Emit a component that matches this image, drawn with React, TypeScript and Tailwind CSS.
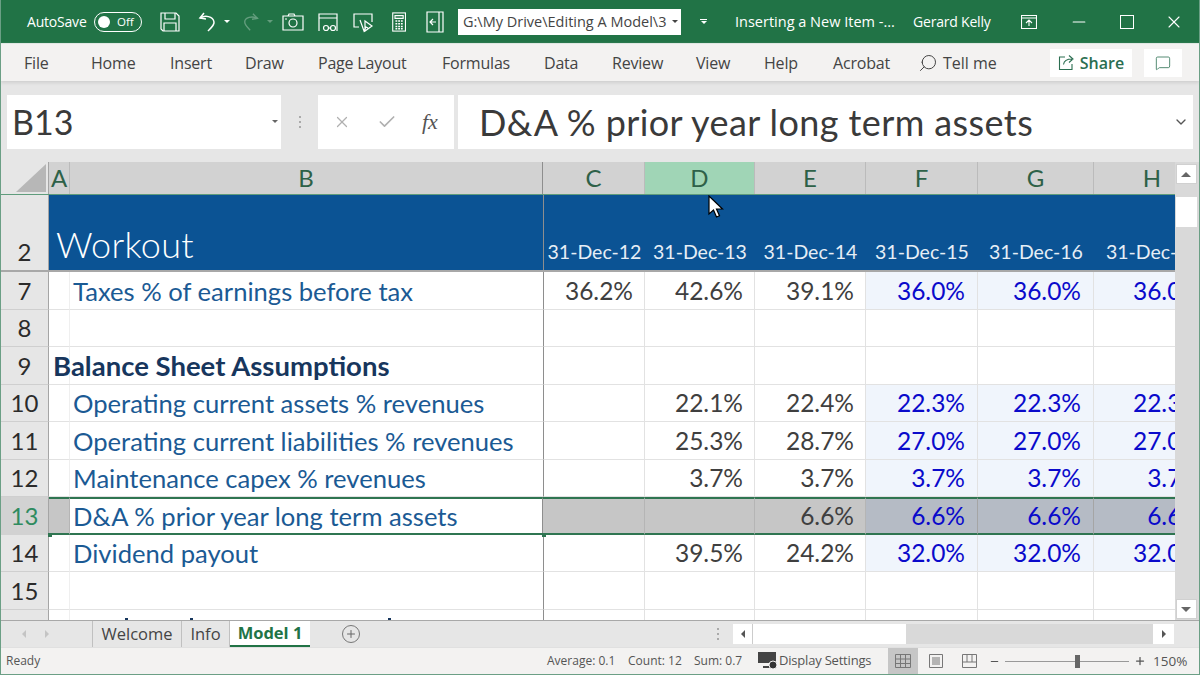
import React from 'react';
import { Search, MessageSquare, ChevronDown, Check, X, Plus, Minus } from 'lucide-react';

const COLS = 'grid grid-cols-[48px_21px_473px_102px_110px_111px_112px_116px_82px] grid-rows-[minmax(0,1fr)]';

type Row = {
  n: string;
  h: string;
  label?: string;
  bold?: boolean;
  vals?: string[];
  inputs?: string[];
};

const rows: Row[] = [
  { n: '7', h: 'h-[38px]', label: 'Taxes % of earnings before tax', vals: ['36.2%', '42.6%', '39.1%'], inputs: ['36.0%', '36.0%', '36.0%'] },
  { n: '8', h: 'h-[37px]' },
  { n: '9', h: 'h-[38px]', label: 'Balance Sheet Assumptions', bold: true },
  { n: '10', h: 'h-[37px]', label: 'Operating current assets % revenues', vals: ['', '22.1%', '22.4%'], inputs: ['22.3%', '22.3%', '22.3%'] },
  { n: '11', h: 'h-[38px]', label: 'Operating current liabilities % revenues', vals: ['', '25.3%', '28.7%'], inputs: ['27.0%', '27.0%', '27.0%'] },
  { n: '12', h: 'h-[37px]', label: 'Maintenance capex % revenues', vals: ['', '3.7%', '3.7%'], inputs: ['3.7%', '3.7%', '3.7%'] },
];

const rowsAfter: Row[] = [
  { n: '14', h: 'h-[37px]', label: 'Dividend payout', vals: ['', '39.5%', '24.2%'], inputs: ['32.0%', '32.0%', '32.0%'] },
  { n: '15', h: 'h-[38px]' },
];

const colHeads = [
  { t: 'C', cls: 'bg-[#d2d2d2]' },
  { t: 'D', cls: 'bg-[#a0d5b6]' },
  { t: 'E', cls: 'bg-[#d2d2d2]' },
  { t: 'F', cls: 'bg-[#d2d2d2]' },
  { t: 'G', cls: 'bg-[#d2d2d2]' },
];

const dates = ['31-Dec-12', '31-Dec-13', '31-Dec-14', '31-Dec-15', '31-Dec-16'];

const grid = 'border-b border-r border-[#e2e2e2]';
const sel = 'border-y-2 border-y-[#2f7551]';

const ValCell = ({ v, sep }: { v: string; sep?: boolean }) => (
  <div className={`${grid} ${sep ? 'border-l border-l-[#8e8e8e]' : ''} flex items-center justify-end pr-[11px] text-[24.500px] text-[#3f3f3f]`}>{v}</div>
);

const InputCell = ({ v, clip }: { v?: string; clip?: boolean }) => (
  <div className={`${grid} ${v ? 'bg-[#f0f5fc]' : ''} flex items-center overflow-hidden ${clip ? 'justify-start' : 'justify-end pr-3'} text-[24.500px] text-[#0a0acb]`}>
    {clip ? <span className="w-[119px] shrink-0 pr-3 text-right">{v}</span> : v}
  </div>
);

const SheetRow = ({ row }: { row: Row }) => (
  <div className={`${COLS} ${row.h}`}>
    <div className="flex items-center justify-center border-b border-r border-b-[#cfcfcf] border-r-[#a5a5a5] bg-[#e6e6e6] text-[24px] text-[#2b2b2b]">{row.n}</div>
    <div className="border-b border-r border-b-[#e2e2e2] border-r-[#efefef]" />
    <div className={`flex items-center whitespace-nowrap border-b border-[#e2e2e2] ${row.bold ? 'ml-[-17px] text-[27.500px] font-bold text-[#17365d]' : 'pl-[3px] text-[25.600px] text-[#1b5a94]'}`}>{row.label}</div>
    <ValCell v={row.vals?.[0] ?? ''} sep />
    <ValCell v={row.vals?.[1] ?? ''} />
    <ValCell v={row.vals?.[2] ?? ''} />
    <InputCell v={row.inputs?.[0]} />
    <InputCell v={row.inputs?.[1]} />
    <InputCell v={row.inputs?.[2]} clip />
  </div>
);

const QatIcon = ({ children, w = 22 }: { children: React.ReactNode; w?: number }) => (
  <svg width={w} height="22" viewBox="0 0 22 22" fill="none" stroke="#fff" strokeWidth="1.2" className="shrink-0">
    {children}
  </svg>
);

const Caret = ({ cls = 'border-t-white' }: { cls?: string }) => (
  <span className={`inline-block h-0 w-0 border-x-[3px] border-t-[3px] border-x-transparent ${cls}`} />
);

const Dots = () => (
  <>
    <span className="h-[2px] bg-[#aaa]" />
    <span className="h-[2px] bg-[#aaa]" />
    <span className="h-[2px] bg-[#aaa]" />
  </>
);

const TitleBar = () => (
  <div className="flex h-[43px] items-center bg-[#217346] pl-[26px] text-[14px] text-white">
    <span className="w-[67px] tracking-[-0.2px]">AutoSave</span>
    <span className="flex h-[20px] w-[48px] items-center rounded-full border border-white pl-[3px] text-[11.500px]">
      <span className="h-[12px] w-[12px] rounded-full bg-white" />
      <span className="ml-[7px]">Off</span>
    </span>
    <div className="ml-[17px]">
      <QatIcon>
        <path d="M2 2h15l3 3v15H4l-2-2z" />
        <path d="M6 2v6h10V2M5 20v-8h12v8" />
      </QatIcon>
    </div>
    <div className="ml-[15px]">
      <QatIcon>
        <path d="M8 2L4 7l6 1" strokeWidth="1.5" />
        <path d="M4 7c5-3 13-2 14 4 .5 3-3 6-6 9" strokeWidth="1.5" />
      </QatIcon>
    </div>
    <span className="ml-[6px] flex"><Caret /></span>
    <div className="ml-[12px] opacity-30">
      <QatIcon w={20}>
        <path d="M12 2l5 5-6 1" strokeWidth="1.5" />
        <path d="M17 7C11 4 3 6 3 11c0 3 3 6 6 9" strokeWidth="1.5" />
      </QatIcon>
    </div>
    <span className="ml-[5px] flex opacity-30"><Caret /></span>
    <div className="ml-[9px]">
      <QatIcon>
        <path d="M1 5h20v14H1zM6 5l1-2h5l1 2" />
        <circle cx="11" cy="12" r="4" />
        <path d="M3 8h2" />
      </QatIcon>
    </div>
    <div className="ml-[13px]">
      <QatIcon>
        <path d="M2 20V3h18v17M2 7h18" />
        <circle cx="9" cy="17" r="2.5" />
        <circle cx="16" cy="17" r="2.5" />
        <path d="M11.500 17h2" />
      </QatIcon>
    </div>
    <div className="ml-[13px]">
      <QatIcon>
        <path d="M7 16H2V3h18v8" />
        <path d="M8 9l4 11 2-4 2 1M13 10l7 5-7 5z" />
      </QatIcon>
    </div>
    <div className="ml-[16px]">
      <QatIcon w={20}>
        <rect x="3" y="1" width="14" height="20" />
        <path d="M5.500 4h9v3h-9z" />
        <path d="M6 10h8M6 13h8M6 16h8M6 18.500h8" strokeDasharray="2 1" strokeWidth="1.600" />
      </QatIcon>
    </div>
    <div className="ml-[14px]">
      <QatIcon>
        <path d="M3 1h16v20H3zM15 1v20" />
        <path d="M12 11H6M9 8l-3 3 3 3" />
      </QatIcon>
    </div>
    <div className="ml-[12px] flex h-[26px] w-[223px] items-center justify-between bg-white pl-[5px] pr-[3px] text-[14.500px] text-[#444]">
      <span className="whitespace-nowrap">G:\My Drive\Editing A Model\3</span>
      <Caret cls="border-t-[#444]" />
    </div>
    <span className="ml-[19px] flex flex-col items-center gap-[1px]">
      <span className="h-[1px] w-[7px] bg-white" />
      <Caret />
    </span>
    <span className="ml-[28px] w-[178px] whitespace-nowrap text-[14.500px]">Inserting a New Item -...</span>
    <span className="w-[108px] whitespace-nowrap tracking-[-0.2px]">Gerard Kelly</span>
    <svg width="16" height="14" viewBox="0 0 16 14" fill="none" stroke="#fff" strokeWidth="1.1">
      <path d="M.5.500h15v13H.500zM.500 3h15M8 11V5M5 8l3-3 3 3" />
    </svg>
    <Minus size={20} strokeWidth={1.300} className="ml-[32px]" />
    <span className="ml-[31px] h-[14px] w-[14px] border border-white" />
    <X size={20} strokeWidth={1.300} className="ml-[30px]" />
  </div>
);

const tabs = [
  { t: 'File', cls: 'w-[67px]' },
  { t: 'Home', cls: 'w-[79px]' },
  { t: 'Insert', cls: 'w-[75px]' },
  { t: 'Draw', cls: 'w-[73px]' },
  { t: 'Page Layout', cls: 'w-[124px]' },
  { t: 'Formulas', cls: 'w-[102px]' },
  { t: 'Data', cls: 'w-[68px]' },
  { t: 'Review', cls: 'w-[84px]' },
  { t: 'View', cls: 'w-[68px]' },
  { t: 'Help', cls: 'w-[69px]' },
  { t: 'Acrobat', cls: 'w-[85px]' },
];

const RibbonTabs = () => (
  <div className="relative flex h-[38px] items-center border-t border-[#dfe7e2] bg-[#f3f2f1] pl-[23px] text-[16px] text-[#444] shadow-[0_2px_3px_#d0d0d0]">
    {tabs.map((tab) => (
      <span key={tab.t} className={`${tab.cls} whitespace-nowrap tracking-[-0.2px]`}>{tab.t}</span>
    ))}
    <Search size={20} strokeWidth={1.200} className="-scale-x-100 text-[#444]" />
    <span className="ml-[5px] w-[107px]">Tell me</span>
    <span className="flex h-[28px] w-[82px] items-center justify-center gap-[5px] bg-white font-semibold text-[#2b6e51]">
      <svg width="17" height="17" viewBox="0 0 17 17" fill="none" stroke="#2b6e51" strokeWidth="1.100" className="shrink-0">
        <path d="M7 3H1.500v12.500H14V10M5.500 10.500C6 7 9 5 14 5M11 1.500L15 5l-4 3.500" />
      </svg>
      Share
    </span>
    <span className="ml-[12px] flex h-[28px] w-[38px] items-center justify-center bg-white">
      <MessageSquare size={16} strokeWidth={1.200} className="text-[#2b6e51]" />
    </span>
  </div>
);

const FormulaBar = () => (
  <div className="flex h-[81px] items-center bg-[#e6e6e6] pl-[6px] font-['Lato',sans-serif] text-[#3a3a3a]">
    <div className="flex h-[54px] w-[274px] items-center justify-between bg-white pl-[5px] pr-[3px] text-[34px]">
      <span>B13</span>
      <Caret cls="border-t-[#666]" />
    </div>
    <div className="ml-[18px] flex w-[2px] flex-col gap-[3px]"><Dots /></div>
    <div className="ml-[17px] flex h-[54px] w-[136px] items-center bg-white pl-[15px] text-[#b0b0b0]">
      <X size={18} strokeWidth={1.600} />
      <Check size={20} strokeWidth={2} className="ml-[26px]" />
      <span className="ml-[25px] font-['Liberation_Serif',serif] text-[22px] italic text-[#555]">fx</span>
    </div>
    <div className="ml-[4px] flex h-[54px] w-[735px] items-center justify-between bg-white pl-[21px] pr-[4px] text-[36px] tracking-[0.4px]">
      <span>D&amp;A % prior year long term assets</span>
      <ChevronDown size={16} strokeWidth={2} className="text-[#555]" />
    </div>
  </div>
);

const Sheet = () => (
  <div className="relative h-[458px] overflow-hidden bg-white font-['Lato',sans-serif] text-[24px] leading-[30px]">
    {/* column headers */}
    <div className={`${COLS} h-[33px] border-b border-[#5f9c7c] text-[#2e6148]`}>
      <div className="flex items-end justify-end border-r border-[#a5a5a5] bg-[#e6e6e6] pb-[2px] pr-[2px]">
        <svg width="30" height="28" viewBox="0 0 30 28"><polygon points="30,0 30,28 0,28" fill="#b7b7b7" /></svg>
      </div>
      <div className="flex items-center justify-center border-r border-[#bbb] bg-[#d2d2d2]">A</div>
      <div className="flex items-center justify-center border-r border-[#8e8e8e] bg-[#d2d2d2]">B</div>
      {colHeads.map((c) => (
        <div key={c.t} className={`flex items-center justify-center border-r border-[#bbb] ${c.cls}`}>{c.t}</div>
      ))}
      <div className="overflow-hidden bg-[#d2d2d2]"><span className="flex h-full w-[116px] items-center justify-center">H</span></div>
    </div>
    {/* frozen title row */}
    <div className={`${COLS} h-[77px] border-b-2 border-[#a8a8a8]`}>
      <div className="flex items-end justify-center border-r border-[#a5a5a5] bg-[#e6e6e6] pb-[3px] text-[#2b2b2b]">2</div>
      <div className="col-span-2 flex items-end bg-[#0b5394] pb-[2px] pl-[7px] text-[36px] font-light leading-[48px] tracking-[0.3px] text-white">Workout</div>
      {dates.map((d, i) => (
        <div key={d} className={`flex items-end justify-center bg-[#0b5394] pb-[3px] text-[19.500px] text-[#e6eef6] ${i === 0 ? 'border-l border-[#8e8e8e]' : ''}`}>{d}</div>
      ))}
      <div className="flex items-end overflow-hidden whitespace-nowrap bg-[#0b5394] pb-[3px] pl-3 text-[19.500px] text-[#e6eef6]">31-Dec-17</div>
    </div>
    {rows.map((r) => <SheetRow key={r.n} row={r} />)}
    {/* selected row */}
    <div className={`${COLS} h-[38px] text-[24.500px]`}>
      <div className="flex items-center justify-center border-r border-[#a5a5a5] bg-[#d2d2d2] text-[24px] text-[#2e8b5f]">13</div>
      <div className={`${sel} border-r border-[#b5b5b5] bg-[#c6c6c6]`} />
      <div className={`${sel} flex items-center whitespace-nowrap border-r border-r-[#8e8e8e] bg-white pl-[3px] text-[25.600px] text-[#1b5a94]`}>D&amp;A % prior year long term assets</div>
      <div className={`${sel} border-r border-r-[#b5b5b5] bg-[#c6c6c6]`} />
      <div className={`${sel} border-r border-r-[#b5b5b5] bg-[#c6c6c6]`} />
      <div className={`${sel} flex items-center justify-end border-r border-r-[#b5b5b5] bg-[#c6c6c6] pr-[11px] text-[#3f3f3f]`}>6.6%</div>
      <div className={`${sel} flex items-center justify-end border-r border-r-[#a5a5a5] bg-[#b5bbc5] pr-3 text-[#0a0acb]`}>6.6%</div>
      <div className={`${sel} flex items-center justify-end border-r border-r-[#a5a5a5] bg-[#b5bbc5] pr-3 text-[#0a0acb]`}>6.6%</div>
      <div className={`${sel} flex items-center overflow-hidden bg-[#b5bbc5] text-[#0a0acb]`}><span className="w-[119px] shrink-0 pr-3 text-right">6.6%</span></div>
    </div>
    {rowsAfter.map((r) => <SheetRow key={r.n} row={r} />)}
    {/* clipped last row */}
    <div className={`${COLS} h-[10px]`}>
      <div className="border-r border-[#a5a5a5] bg-[#e6e6e6]" />
      <div className="border-r border-[#efefef]" />
      <div />
      <div className="border-l border-r border-l-[#8e8e8e] border-r-[#e2e2e2]" />
      <div className="border-r border-[#e2e2e2]" />
      <div className="border-r border-[#e2e2e2]" />
      <div className="border-r border-[#e2e2e2]" />
      <div className="border-r border-[#e2e2e2]" />
      <div />
    </div>
    {/* fragments of the next row's text, cut by the sheet edge */}
    <span className="absolute bottom-0 left-[124px] h-[2px] w-[3px] bg-[#17365d]" />
    <span className="absolute bottom-0 left-[189px] h-[2px] w-[3px] bg-[#17365d]" />
    <span className="absolute bottom-0 left-[387px] h-[2px] w-[3px] bg-[#17365d]" />
    {/* selection handles */}
    <span className="absolute left-[47px] top-[371px] h-[4px] w-[4px] bg-[#2f7551]" />
    <span className="absolute left-[541px] top-[371px] h-[4px] w-[4px] bg-[#2f7551]" />
    {/* vertical scrollbar */}
    <div className="absolute right-0 top-0 flex h-full w-[24px] flex-col items-center bg-[#d9d9d9] pr-[2px]">
      <div className="mt-[2px] flex h-[20px] w-[21px] items-center justify-center border border-[#d0d0d0] bg-white"><span className="h-0 w-0 border-x-[5px] border-b-[5px] border-x-transparent border-b-[#666]" /></div>
      <div className="mt-[13px] h-[30px] w-[21px] bg-white" />
      <div className="mb-[1px] mt-auto flex h-[20px] w-[21px] items-center justify-center border border-[#d0d0d0] bg-white"><span className="h-0 w-0 border-x-[5px] border-t-[5px] border-x-transparent border-t-[#666]" /></div>
    </div>
    {/* mouse pointer */}
    <svg width="16" height="24" viewBox="0 0 16 24" className="absolute left-[707px] top-[33px]">
      <path d="M1 1v18l4.500-4 3 7 3-1.300-3-6.700h6z" fill="#fff" stroke="#000" strokeWidth="1.200" />
    </svg>
  </div>
);

const SheetTabs = () => (
  <div className="flex h-[27px] items-stretch border-t border-[#a8a8a8] bg-[#e6e6e6] font-['Open_Sans',sans-serif] text-[16.500px] text-[#444]">
    <div className="flex w-[91px] items-center gap-[19px] pl-[21px]">
      <span className="h-0 w-0 border-y-[4px] border-r-[4px] border-y-transparent border-r-[#c4c4c4]" />
      <span className="h-0 w-0 border-y-[4px] border-l-[4px] border-y-transparent border-l-[#c4c4c4]" />
    </div>
    <span className="flex w-[90px] items-center justify-center border-x border-[#c0c0c0]">Welcome</span>
    <span className="flex w-[48px] items-center justify-center border-r border-[#c0c0c0]">Info</span>
    <span className="flex w-[80px] items-center justify-center border-b-2 border-[#217346] bg-white font-bold text-[#217346]">Model 1</span>
    <span className="ml-[32px] flex w-[18px] items-center">
      <span className="flex h-[18px] w-[18px] items-center justify-center rounded-full border border-[#777] text-[#666]"><Plus size={12} strokeWidth={2} /></span>
    </span>
    <div className="ml-[357px] flex w-[2px] flex-col justify-center gap-[3px]"><Dots /></div>
    <div className="ml-[14px] flex w-[441px] items-center self-center bg-[#d9d9d9]">
      <span className="flex h-[20px] w-[20px] items-center justify-center border-r border-[#ccc] bg-white"><span className="h-0 w-0 border-y-[4px] border-r-[4px] border-y-transparent border-r-[#555]" /></span>
      <span className="h-[20px] w-[153px] bg-white" />
      <span className="ml-auto flex h-[20px] w-[21px] items-center justify-center bg-white"><span className="h-0 w-0 border-y-[4px] border-l-[4px] border-y-transparent border-l-[#555]" /></span>
    </div>
  </div>
);

const StatusBar = () => (
  <div className="flex h-[27px] items-center border-t border-[#e0e0e0] bg-[#f3f2f1] pl-[5px] font-['Open_Sans',sans-serif] text-[12px] text-[#555]">
    <span className="w-[541px]">Ready</span>
    <span className="w-[81px] whitespace-nowrap">Average: 0.1</span>
    <span className="w-[66px] whitespace-nowrap">Count: 12</span>
    <span className="w-[64px] whitespace-nowrap">Sum: 0.7</span>
    <svg width="21" height="20" viewBox="0 0 21 20" className="shrink-0">
      <rect x="0" y="1" width="18" height="11" fill="#444" />
      <path d="M5 16h7" stroke="#444" strokeWidth="2" />
      <circle cx="15" cy="14" r="4" fill="#333" stroke="#f3f2f1" />
    </svg>
    <span className="w-[109px] whitespace-nowrap text-[13px] tracking-[-0.2px]">Display Settings</span>
    <span className="flex h-full w-[30px] items-center justify-center bg-[#c6c6c6]">
      <svg width="16" height="14" viewBox="0 0 16 14" fill="none" stroke="#777"><path d="M.5.5h15v13H.5zM5.500.5v13M10.500.5v13M.5 5h15M.5 9.500h15" /></svg>
    </span>
    <span className="flex w-[36px] items-center justify-center">
      <svg width="14" height="14" viewBox="0 0 14 14" fill="none" stroke="#777"><path d="M.5.500h13v13H.500zM3 4h8M3 6h8M3 8h8M3 10h8" /></svg>
    </span>
    <span className="flex w-[30px] items-center justify-center">
      <svg width="15" height="14" viewBox="0 0 15 14" fill="none" stroke="#777"><path d="M.5.500h14v13H.500zM.500 8h14M5 .500V8M10 .500V8" /></svg>
    </span>
    <Minus size={11} strokeWidth={2.500} className="ml-[5px] text-[#555]" />
    <span className="relative ml-[5px] h-[1px] w-[124px] bg-[#999]">
      <span className="absolute left-[70px] top-[-6px] h-[13px] w-[5px] bg-[#666]" />
    </span>
    <Plus size={12} strokeWidth={2.500} className="ml-[5px] text-[#555]" />
    <span className="ml-[7px] text-[13.500px]">150%</span>
  </div>
);

export default function App() {
  return (
    <div className="h-[675px] w-[1200px] overflow-hidden border-x border-b border-[#6b9f85] bg-white font-['Open_Sans',sans-serif]">
      <TitleBar />
      <RibbonTabs />
      <FormulaBar />
      <Sheet />
      <SheetTabs />
      <StatusBar />
    </div>
  );
}
